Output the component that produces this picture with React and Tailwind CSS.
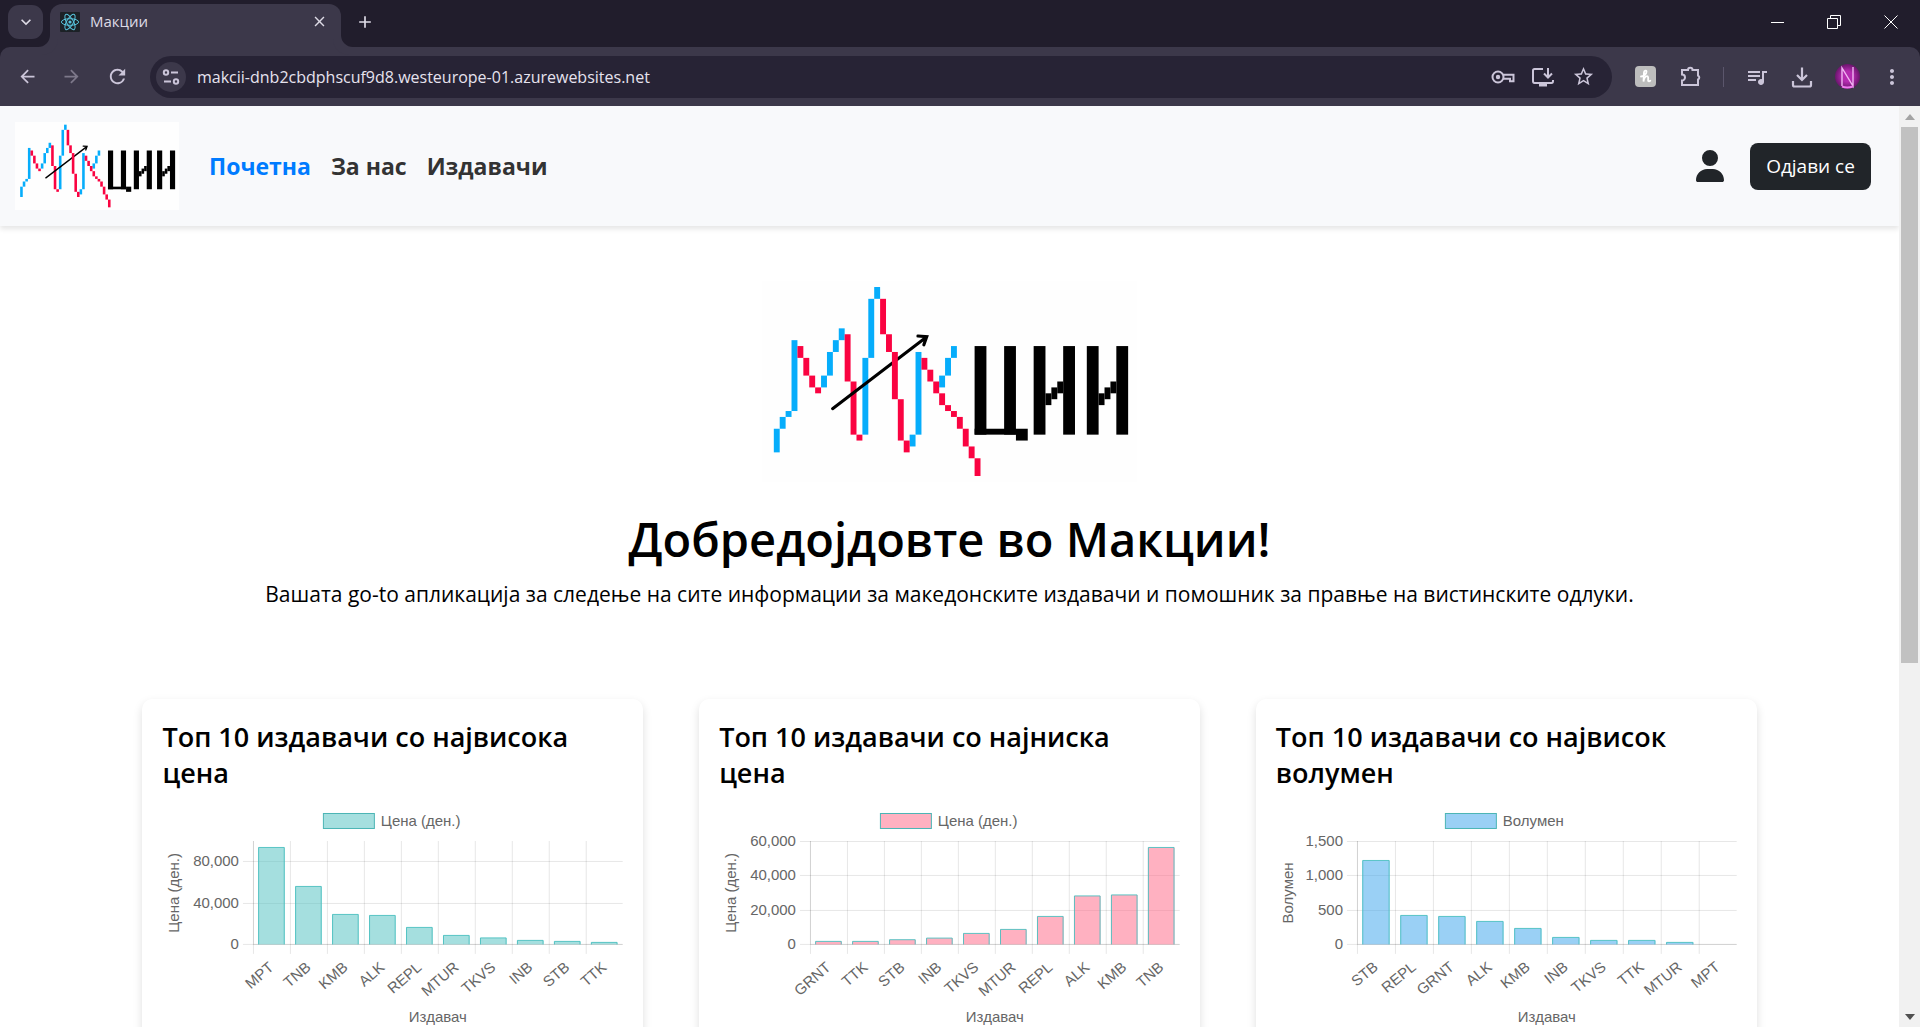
import React from "react";
import { FaUser } from "react-icons/fa6";
import {
  MdArrowBack,
  MdArrowForward,
  MdClose,
  MdAdd,
  MdStarBorder,
  MdQueueMusic,
  MdMoreVert,
  MdRefresh,
  MdKeyboardArrowDown,
} from "react-icons/md";

const BLUE_CANDLES = [
  [0, 24, 28], [1, 22, 24], [2, 21, 22], [3, 9, 21], [8, 15, 17], [9, 11, 15], [10, 9, 11], [11, 7, 9],
  [15, 12, 25], [16, 2, 12], [17, 0, 2], [23, 25, 27], [24, 11, 25], [28, 15, 17], [29, 12, 15], [30, 10, 12],
];
const RED_CANDLES = [
  [4, 10, 12], [5, 12, 15], [6, 15, 17], [7, 17, 18], [12, 8, 16], [13, 16, 25], [14, 25, 26], [18, 2, 8],
  [19, 8, 11], [21, 19, 26], [22, 26, 28], [25, 12, 14], [26, 14, 16], [27, 16, 18], [28, 18, 20],
  [29, 20, 21], [30, 21, 22], [31, 22, 24], [32, 24, 27], [33, 27, 29], [34, 29, 32],
];
const BLACK_BLOCKS = [
  [34, 10, 2, 15], [39, 10, 2, 15], [34, 24, 7, 1], [41, 24, 2, 2],
  [44, 10, 2, 15], [49, 10, 2, 15], [46, 18, 1, 2], [47, 17, 1, 2], [48, 16, 1, 2],
  [53, 10, 2, 15], [58, 10, 2, 15], [55, 18, 1, 2], [56, 17, 1, 2], [57, 16, 1, 2],
];

function Logo({ className }) {
  return (
    <svg viewBox="-2 -1 63.5 34" className={className} role="img" aria-label="Макции">
      <rect x="-2" y="-1" width="63.5" height="34" fill="#fefefe" />
      {BLUE_CANDLES.map(([x, a, b]) => (
        <rect key={"b" + x} x={x} y={a} width="1" height={b - a} fill="#06adfb" />
      ))}
      {RED_CANDLES.map(([x, a, b]) => (
        <rect key={"r" + x} x={x} y={a} width="1" height={b - a} fill="#fa0341" />
      ))}
      <path
        d="M9.95 20.6 25.8 8.5M24.4 8.3 25.9 8.4 25.4 9.8"
        fill="none"
        stroke="#000"
        strokeWidth="0.52"
        strokeLinecap="round"
      />
      <rect x="20" y="11" width="1" height="8" fill="#fa0341" />
      {BLACK_BLOCKS.map(([x, y, w, h], i) => (
        <rect key={i} x={x} y={y} width={w} height={h} fill="#000" />
      ))}
    </svg>
  );
}

function ReactIcon() {
  return (
    <svg viewBox="0 0 20 20" className="size-5" aria-hidden="true">
      <rect width="20" height="20" rx="1" fill="#1c2126" />
      <g fill="none" stroke="#58c4dc" strokeWidth="1">
        <ellipse cx="10" cy="10" rx="8.6" ry="3.3" />
        <ellipse cx="10" cy="10" rx="8.6" ry="3.3" transform="rotate(60 10 10)" />
        <ellipse cx="10" cy="10" rx="8.6" ry="3.3" transform="rotate(120 10 10)" />
      </g>
      <circle cx="10" cy="10" r="1.6" fill="#58c4dc" />
    </svg>
  );
}

function IconButton({ label, className = "", children }) {
  return (
    <button type="button" aria-label={label} className={"flex shrink-0 items-center justify-center " + className}>
      {children}
    </button>
  );
}

function TabStrip() {
  return (
    <div className="flex h-[47px] items-start bg-[#211d2c] pl-2 text-[#dedbe6]">
      <IconButton label="Search tabs" className="mt-[5px] h-[34px] w-[35px] rounded-[11px] bg-[#3c384a]">
        <MdKeyboardArrowDown className="size-5" />
      </IconButton>
      <div className="relative ml-[7px] mt-1 flex h-[43px] w-[291px] items-center rounded-t-xl bg-[#3c384a] pb-2 pl-[10px] pr-3 before:absolute before:-left-3 before:bottom-0 before:size-3 before:rounded-br-xl before:shadow-[4px_4px_0_4px_#3c384a] after:absolute after:-right-3 after:bottom-0 after:size-3 after:rounded-bl-xl after:shadow-[-4px_4px_0_4px_#3c384a]">
        <ReactIcon />
        <span className="ml-[10px] flex-1 text-[15px]">Макции</span>
        <IconButton label="Close tab" className="size-5">
          <MdClose className="size-[17px]" />
        </IconButton>
      </div>
      <IconButton label="New tab" className="ml-[14px] mt-[12px] size-5">
        <MdAdd className="size-5" />
      </IconButton>
      <div className="ml-auto flex h-[43px] items-center text-white">
        <IconButton label="Minimize" className="h-full w-14">
          <svg viewBox="0 0 14 14" className="size-[14px]" fill="none" stroke="currentColor"><path d="M0 7.5h13" /></svg>
        </IconButton>
        <IconButton label="Restore" className="h-full w-14">
          <svg viewBox="0 0 14 14" className="size-[14px]" fill="none" stroke="currentColor">
            <path d="M.5 3.5h10v10h-10zM3.5 3.5v-3h10v10h-3" />
          </svg>
        </IconButton>
        <IconButton label="Close" className="h-full w-[58px]">
          <svg viewBox="0 0 14 14" className="size-[14px]" fill="none" stroke="currentColor"><path d="M.5.5l13 13M13.5.5l-13 13" /></svg>
        </IconButton>
      </div>
    </div>
  );
}

function Toolbar() {
  return (
    <div className="bg-[#211d2c]">
      <div className="flex h-[59px] items-center rounded-t-[10px] bg-[#3c384a] pl-[15px] pr-4 text-[#cbc5d9]">
        <IconButton label="Back" className="size-6"><MdArrowBack className="size-[21px]" /></IconButton>
        <IconButton label="Forward" className="ml-5 size-6 text-[#7d788a]"><MdArrowForward className="size-[21px]" /></IconButton>
        <IconButton label="Reload" className="ml-[22px] size-6"><MdRefresh className="size-[23px]" /></IconButton>
        <div className="ml-[21px] flex h-[42px] flex-1 items-center rounded-full bg-[#272335] pl-[6px] pr-[17px]">
          <IconButton label="Site information" className="size-[30px] rounded-full bg-[#3c384a]">
            <svg viewBox="0 0 18 18" className="size-[18px]" fill="none" stroke="currentColor" strokeWidth="2">
              <circle cx="4" cy="4.5" r="2.2" /><path d="M9 4.5h7M2 13.5h7" /><circle cx="14" cy="13.5" r="2.2" />
            </svg>
          </IconButton>
          <input
            aria-label="Address"
            defaultValue="makcii-dnb2cbdphscuf9d8.westeurope-01.azurewebsites.net"
            className="ml-[11px] min-w-0 flex-1 bg-transparent text-[16px] text-[#e6e2ee] outline-none"
          />
          <IconButton label="Passwords" className="size-6">
            <svg viewBox="0 0 24 24" className="size-6" fill="none" stroke="currentColor" strokeWidth="2">
              <circle cx="7" cy="12" r="5.5" /><circle cx="7" cy="12" r="2.2" fill="currentColor" stroke="none" />
              <path d="M12 9.8h10.500v6.500h-3.500v-2.500H12" />
            </svg>
          </IconButton>
          <IconButton label="Install app" className="ml-4 size-6">
            <svg viewBox="0 0 24 24" className="size-6" fill="none" stroke="currentColor" strokeWidth="2">
              <path d="M12 4H3.5Q2 4 2 5.500v10.500Q2 18 3.500 18h17q1.500 0 1.500-2v-1M17 3v9M13 8.500l4 4 4-4" />
              <path d="M8 20h8" strokeWidth="3" />
            </svg>
          </IconButton>
          <IconButton label="Bookmark" className="ml-4 size-6"><MdStarBorder className="size-[23px]" /></IconButton>
        </div>
        <IconButton label="Honey" className="ml-[23px] size-[21px] rounded-[4px] bg-[#bdbdbd]">
          <svg viewBox="0 0 21 21" className="size-[21px]" fill="none" stroke="#fff" strokeWidth="1.8" strokeLinecap="round">
            <path d="M6 10.500c2.500 0 5.500-2.500 5.500-4.800 0-1.700-2.200-1.500-2.500.500L8.500 15.500c.5-3 1.800-5.300 3.600-5.300 1.500 0 1 2.800 1 4.200 0 1.300 1.400 1.200 2.200.200" />
          </svg>
        </IconButton>
        <IconButton label="Extensions" className="ml-[23px] size-6">
          <svg viewBox="0 0 24 24" className="size-6" fill="none" stroke="currentColor" strokeWidth="2">
            <path d="M3 5h6a2 2 0 0 1 4.500 0H19v5.500a2.200 2.200 0 0 1 0 4V20H3v-4.500a3 3 0 0 0 0-6z" />
          </svg>
        </IconButton>
        <span className="ml-5 h-5 w-px bg-[#5b566c]" />
        <IconButton label="Media" className="ml-[21px] size-6"><MdQueueMusic className="size-[26px]" /></IconButton>
        <IconButton label="Downloads" className="ml-[21px] size-6">
          <svg viewBox="0 0 24 24" className="size-6" fill="none" stroke="currentColor" strokeWidth="2.2">
            <path d="M12 2.500v12M7 10l5 5 5-5M3 16v4q0 1.500 1.500 1.500h15Q21 21.500 21 20v-4" />
          </svg>
        </IconButton>
        <IconButton label="Profile" className="ml-[21px] size-[25px] rounded-full bg-radial from-[#b52bb0] from-30% to-[#3a0740]">
          <svg viewBox="0 0 25 25" className="size-[25px]" fill="none" stroke="#f0b4f2" strokeWidth="1.4">
            <path d="M7 22V4l11 18V3" /><path d="M7 22.500q5 2 11 0" stroke="#f07cf0" strokeWidth="2" />
          </svg>
        </IconButton>
        <IconButton label="Menu" className="ml-5 size-6"><MdMoreVert className="size-[26px]" /></IconButton>
      </div>
    </div>
  );
}

function Navbar() {
  return (
    <header className="flex h-[120px] items-center bg-[#f8f9fb] pl-[15px] pr-7 shadow-[0_3px_5px_rgba(0,0,0,0.1)]">
      <a href="#home" className="shrink-0"><Logo className="h-[88px] w-[164px]" /></a>
      <nav className="ml-[30px] flex gap-5 text-[23px] font-bold text-[#333]">
        <a href="#home" className="text-[#007bff]">Почетна</a>
        <a href="#about">За нас</a>
        <a href="#issuers">Издавачи</a>
      </nav>
      <a href="#profile" aria-label="Профил" className="ml-auto text-[#212529]"><FaUser className="h-8 w-7" /></a>
      <button type="button" className="ml-[26px] h-[47px] w-[121px] rounded-lg bg-[#212529] text-[19px] text-white">
        Одјави се
      </button>
    </header>
  );
}

const ZERO = 143;
const CHARTS = [
  {
    title: "Топ 10 издавачи со највисока цена",
    series: "Цена (ден.)",
    fill: "rgba(75,192,192,0.5)",
    axis: 91,
    legend: 161,
    angle: -41,
    ticks: [["80,000", 60], ["40,000", 102], ["0", ZERO]],
    bars: [["MPT", 97], ["TNB", 58], ["KMB", 30], ["ALK", 29], ["REPL", 17], ["MTUR", 9], ["TKVS", 6.5], ["INB", 4], ["STB", 3], ["TTK", 2]],
  },
  {
    title: "Топ 10 издавачи со најниска цена",
    series: "Цена (ден.)",
    fill: "rgba(255,99,132,0.5)",
    axis: 91,
    legend: 161,
    angle: -41,
    ticks: [["60,000", 40], ["40,000", 74], ["20,000", 109], ["0", ZERO]],
    bars: [["GRNT", 3], ["TTK", 3], ["STB", 4.7], ["INB", 6.3], ["TKVS", 11], ["MTUR", 15], ["REPL", 28], ["ALK", 48.5], ["KMB", 49.5], ["TNB", 97]],
  },
  {
    title: "Топ 10 издавачи со највисок волумен",
    series: "Волумен",
    fill: "rgba(54,162,235,0.5)",
    axis: 81,
    legend: 169,
    angle: -39,
    ticks: [["1,500", 40], ["1,000", 74], ["500", 109], ["0", ZERO]],
    bars: [["STB", 84], ["REPL", 29], ["GRNT", 28], ["ALK", 23], ["KMB", 16], ["INB", 7], ["TKVS", 4], ["TTK", 4], ["MTUR", 2], ["MPT", 0]],
  },
];

function BarChart({ series, fill, axis, legend, angle, ticks, bars }) {
  const step = (461 - axis) / bars.length;
  const barWidth = step * 0.72;
  const middle = (axis + 461) / 2;
  return (
    <svg
      viewBox="0 0 461 231"
      className="mt-[10px] h-auto w-full overflow-visible font-['Liberation_Sans',Arial,sans-serif] text-[15px]"
      fill="#666"
      role="img"
      aria-label={series}
    >
      <rect x={legend + 0.5} y="12.5" width="51" height="15" fill={fill} stroke="#4bb5b5" />
      <text x={legend + 58} y="25">{series}</text>
      <g stroke="rgba(0,0,0,0.1)">
        {ticks.map(([t, y]) => (
          <path key={t} d={`M${axis - 10} ${y + 0.5}H461`} />
        ))}
        {bars.map(([n], i) => (
          <path key={n} d={`M${Math.round(axis + i * step) + 0.5} 40V153`} />
        ))}
        <path d={`M${axis + 0.5} 40V${ZERO}M${axis} ${ZERO + 0.5}H461`} />
      </g>
      {ticks.map(([t, y]) => (
        <text key={t} x={axis - 14} y={y + 5} textAnchor="end">{t}</text>
      ))}
      {bars.map(([n, h], i) => {
        const center = axis + (i + 0.5) * step;
        const left = center - barWidth / 2;
        const top = ZERO + 0.5 - h;
        return (
          <g key={n}>
            <rect x={left} y={top} width={barWidth} height={h} fill={fill} />
            {h > 0 && (
              <path
                d={`M${left + 0.5} ${ZERO + 0.5}V${top}H${left + barWidth - 0.5}V${ZERO + 0.5}`}
                fill="none"
                stroke="rgba(75,192,192,0.9)"
              />
            )}
            <text textAnchor="end" transform={`translate(${center} 164) rotate(${angle})`} y="5">{n}</text>
          </g>
        );
      })}
      <text x={middle} y="221" textAnchor="middle">Издавач</text>
      <text textAnchor="middle" transform="translate(17 92) rotate(-90)">{series}</text>
    </svg>
  );
}

function Card({ title, ...chart }) {
  return (
    <section className="rounded-[10px] bg-white p-5 shadow-[0_4px_10px_rgba(0,0,0,0.13)]">
      <h2 className="text-[27px] font-semibold leading-9 text-black">{title}</h2>
      <BarChart {...chart} />
    </section>
  );
}

function Scrollbar() {
  return (
    <div className="flex w-[21px] shrink-0 flex-col items-center bg-[#f1f1f1]" aria-hidden="true">
      <div className="flex h-[21px] items-center"><svg viewBox="0 0 10 6" className="h-[6px] w-[10px]" fill="#a3a3a3"><path d="M0 6 5 0l5 6z" /></svg></div>
      <div className="flex w-full flex-1 flex-col items-center">
        <div className="h-[61%] w-[17px] bg-[#c1c1c1]" />
      </div>
      <div className="flex h-[21px] items-center"><svg viewBox="0 0 10 6" className="h-[6px] w-[10px]" fill="#505050"><path d="M0 0 5 6l5-6z" /></svg></div>
    </div>
  );
}

export default function App() {
  return (
    <div className="flex h-screen flex-col overflow-hidden bg-white font-['Open_Sans','Noto_Sans',sans-serif]">
      <TabStrip />
      <Toolbar />
      <div className="flex min-h-0 flex-1">
        <div className="min-w-0 flex-1 overflow-hidden">
          <Navbar />
          <main>
            <div className="flex flex-col items-center pt-[55px] text-center text-black">
              <Logo className="h-[201px] w-[375px]" />
              <h1 className="mt-[27px] text-[47px] font-semibold leading-[60px]">Добредојдовте во Макции!</h1>
              <p className="mt-2 text-[21px] leading-[34px]">
                Вашата go-to апликација за следење на сите информации за македонските издавачи и помошник за правње на вистинските одлуки.
              </p>
            </div>
            <div className="mx-auto mt-[88px] grid w-[85%] grid-cols-3 gap-14">
              {CHARTS.map((c) => (
                <Card key={c.title} {...c} />
              ))}
            </div>
          </main>
        </div>
        <Scrollbar />
      </div>
    </div>
  );
}
